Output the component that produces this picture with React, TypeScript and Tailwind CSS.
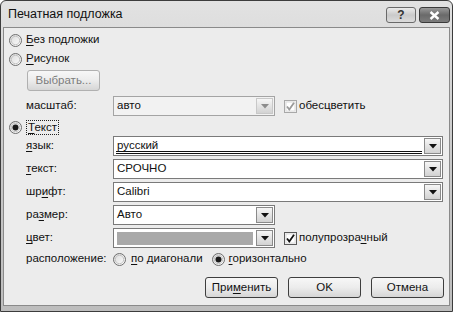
import React from 'react';

const font = { fontFamily: '"Liberation Sans", Arial, sans-serif' };

function Radio({ checked }: { checked?: boolean }) {
  return (
    <svg width="13" height="13" viewBox="0 0 13 13" className="shrink-0">
      <defs>
        <linearGradient id="rg" x1="0" y1="0" x2="1" y2="1">
          <stop offset="0" stopColor="#d8d8d8" />
          <stop offset="1" stopColor="#ffffff" />
        </linearGradient>
      </defs>
      <circle cx="6.5" cy="6.5" r="6" fill="url(#rg)" stroke="#6e6e6e" />
      <circle cx="6.5" cy="6.5" r="4.2" fill="none" stroke="#c4c4c4" />
      {checked && <circle cx="6.5" cy="6.5" r="3" fill="#1a1a1a" />}
    </svg>
  );
}

function Check({ dim }: { dim?: boolean }) {
  return (
    <svg width="13" height="13" viewBox="0 0 13 13" className="shrink-0">
      <rect x="0.5" y="0.5" width="12" height="12" fill="#f4f4f4" stroke={dim ? '#a8a8a8' : '#5a5a5a'} />
      <rect x="2" y="2" width="9" height="9" fill="#ffffff" stroke="#dcdcdc" />
      <path d="M3 6.5 L5.3 9.5 L10 2.8" fill="none" stroke={dim ? '#9a9a9a' : '#111'} strokeWidth="1.8" />
    </svg>
  );
}

function Arrow({ dim }: { dim?: boolean }) {
  return (
    <div
      className={`flex h-full w-[17px] items-center justify-center border bg-gradient-to-b from-[#f6f6f6] to-[#d2d2d2] ${
        dim ? 'border-[#c8c8c8]' : 'border-[#8a8a8a]'
      }`}
    >
      <svg width="8" height="5" viewBox="0 0 8 5">
        <path d="M0 0 H8 L4 4.5 Z" fill={dim ? '#8c8c8c' : '#111'} />
      </svg>
    </div>
  );
}

function Combo({
  w,
  value,
  dim,
  swatch,
  focus,
}: {
  w: string;
  value?: string;
  dim?: boolean;
  swatch?: boolean;
  focus?: boolean;
}) {
  return (
    <div
      className={`flex h-[20px] ${w} items-stretch border p-px ${
        dim ? 'border-[#a4a4a4] bg-[#f2f2f2]' : 'border-[#7a7a7a] bg-white'
      }`}
    >
      <div className="relative flex flex-1 items-center pl-[2px] text-[#111]">
        {swatch ? (
          <div className="mr-[3px] h-[13px] w-full bg-[#a9a9a9]" />
        ) : (
          <span className="leading-none">{value}</span>
        )}
        {focus && (
          <div className="absolute bottom-[0px] left-[1px] right-[2px] h-[3px] border-y border-[#111]" />
        )}
      </div>
      <Arrow dim={dim} />
    </div>
  );
}

function U({ children }: { children: React.ReactNode }) {
  return <span className="underline underline-offset-2">{children}</span>;
}

function Label({ children }: { children: React.ReactNode }) {
  return <div className="w-[87px] shrink-0 text-[#111]">{children}</div>;
}

function Btn({ children, dim }: { children: React.ReactNode; dim?: boolean }) {
  return (
    <div
      className={`flex h-[21px] w-[73px] items-center justify-center rounded-[3px] border bg-gradient-to-b from-[#f7f7f7] via-[#ececec] to-[#d6d6d6] ${
        dim ? 'border-[#b0b0b0] text-[#7c7c7c]' : 'border-[#3e3e3e] text-[#111]'
      }`}
    >
      {children}
    </div>
  );
}

export default function App() {
  return (
    <div
      className="flex h-[312px] w-[453px] flex-col overflow-hidden rounded-t-[6px] border border-[#3c3c3c] bg-gradient-to-b from-[#e2e2e2] via-[#c9c9c9] to-[#bdbdbd]"
      style={font}
    >
      <div className="flex h-[26px] shrink-0 items-center justify-between pl-[7px] pr-[2px]">
        <div className="pt-[1px] text-[12.5px] text-[#111]">Печатная подложка</div>
        <div className="flex gap-[3px] self-start pt-[6px]">
          <div className="flex h-[16px] w-[30px] items-center justify-center rounded-[3px] border border-[#6a6a6a] bg-gradient-to-b from-[#ececec] via-[#cacaca] to-[#dcdcdc] text-[12px] font-bold leading-none text-[#333]">
            ?
          </div>
          <div className="flex h-[16px] w-[31px] items-center justify-center rounded-[3px] border border-[#3a3a3a] bg-gradient-to-b from-[#9a9a9a] via-[#6a6a6a] to-[#7c7c7c]">
            <svg width="11" height="9" viewBox="0 0 11 9">
              <path d="M1.5 1 L9.5 8 M9.5 1 L1.5 8" stroke="#fff" strokeWidth="2.4" />
            </svg>
          </div>
        </div>
      </div>

      <div className="mx-[2px] mb-[5px] flex flex-1 flex-col border border-[#8a8a8a] bg-[#ececec] text-[11.5px] text-[#111]">
        <div className="mt-[3px] flex h-[18px] items-center gap-[4px] pl-[5px]">
          <Radio />
          <span>
            <U>Б</U>ез подложки
          </span>
        </div>
        <div className="mt-[1px] flex h-[18px] items-center gap-[4px] pl-[5px]">
          <Radio />
          <span>
            <U>Р</U>исунок
          </span>
        </div>
        <div className="mt-[2px] pl-[23px]">
          <Btn dim>Выбрать...</Btn>
        </div>
        <div className="mt-[5px] flex items-center pl-[22px]">
          <Label>масштаб:</Label>
          <Combo w="w-[162px]" value="авто" dim />
          <div className="ml-[9px] flex items-center gap-[2px]">
            <Check dim />
            <span>обесцветить</span>
          </div>
        </div>
        <div className="mt-[3px] flex h-[17px] items-center gap-[4px] pl-[5px]">
          <Radio checked />
          <span className="border border-dotted border-[#222] px-[1px] leading-[13px]">
            <U>Т</U>екст
          </span>
        </div>
        <div className="flex flex-col gap-[3px] pl-[22px]">
          <div className="flex items-center">
            <Label>
              <U>я</U>зык:
            </Label>
            <Combo w="w-[330px]" value="русский" focus />
          </div>
          <div className="flex items-center">
            <Label>
              <U>т</U>екст:
            </Label>
            <Combo w="w-[330px]" value="СРОЧНО" />
          </div>
          <div className="flex items-center">
            <Label>
              шр<U>и</U>фт:
            </Label>
            <Combo w="w-[330px]" value="Calibri" />
          </div>
          <div className="flex items-center">
            <Label>
              ра<U>з</U>мер:
            </Label>
            <Combo w="w-[162px]" value="Авто" />
          </div>
          <div className="flex items-center">
            <Label>
              <U>ц</U>вет:
            </Label>
            <Combo w="w-[162px]" swatch />
            <div className="ml-[9px] flex items-center gap-[2px]">
              <Check />
              <span>
                полупрозра<U>ч</U>ный
              </span>
            </div>
          </div>
        </div>
        <div className="mt-[2px] flex h-[18px] items-center pl-[22px]">
          <Label>расположение:</Label>
          <div className="flex items-center gap-[5px]">
            <Radio />
            <span>
              <U>п</U>о диагонали
            </span>
          </div>
          <div className="ml-[9px] flex items-center gap-[4px]">
            <Radio checked />
            <span>
              <U>г</U>оризонтально
            </span>
          </div>
        </div>
        <div className="mt-[9px] flex justify-end gap-[10px] pr-[5px]">
          <Btn>
            При<U>м</U>енить
          </Btn>
          <Btn>OK</Btn>
          <Btn>Отмена</Btn>
        </div>
      </div>
    </div>
  );
}
